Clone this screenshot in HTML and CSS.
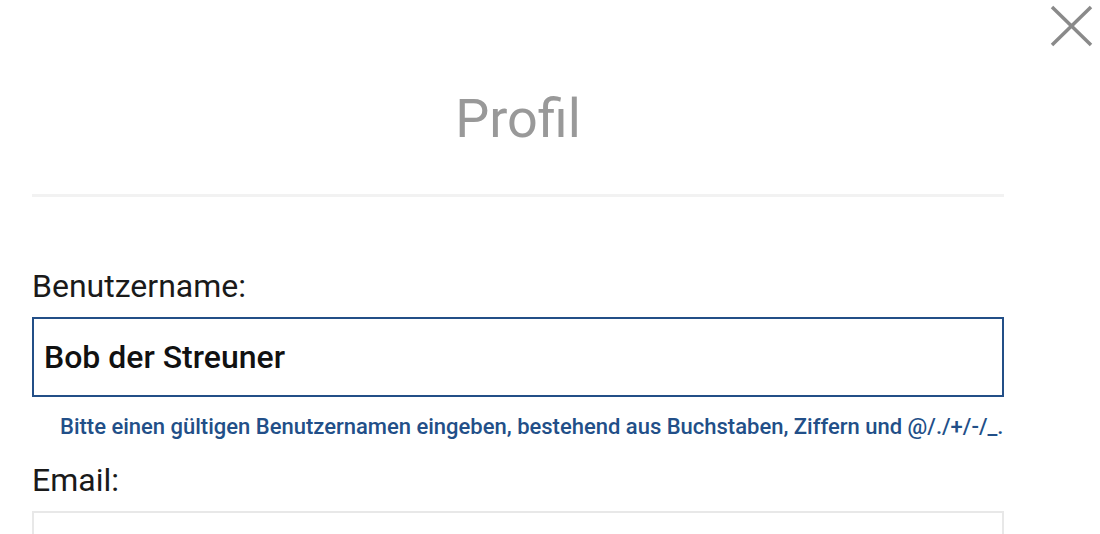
FILE: index.html
```html
<!DOCTYPE html>
<html lang="de">
<head>
  <meta charset="UTF-8" />
  <meta name="viewport" content="width=device-width, initial-scale=1" />
  <title>Profil</title>
  <link rel="stylesheet" href="styles.css">
</head>
<body>

<button class="close" type="button" aria-label="Schließen">
  <svg width="44" height="44" viewBox="0 0 44 44">
    <path d="M2 3 L41 41 M41 3 L2 41" stroke="#8a8a8a" stroke-width="3.5" fill="none" />
  </svg>
</button>

<div class="panel">
  <h1>Profil</h1>

  <form>
    <label for="username">Benutzername:</label>
    <input type="text" id="username" class="active" value="Bob der Streuner">
    <p class="help">Bitte einen gültigen Benutzernamen eingeben, bestehend aus Buchstaben, Ziffern und @/./+/-/_.</p>

    <label for="email">Email:</label>
    <input type="email" id="email">
  </form>
</div>

</body>
</html>
```

FILE: styles.css
```css
body {
  margin: 0;
  font-family: Roboto, 'Noto Sans', sans-serif;
  background: #fff;
  color: #1a1a1a;
  overflow: hidden;
}

.close {
  position: absolute;
  top: 4px;
  right: 6px;
  padding: 0;
  border: none;
  background: none;
  cursor: pointer;
}

.panel {
  width: 972px;
  margin-left: 32px;
}

h1 {
  margin: 0;
  padding-top: 84px;
  padding-bottom: 40px;
  text-align: center;
  font-size: 54px;
  font-weight: 400;
  color: #999;
  border-bottom: 3px solid #f2f2f2;
  line-height: 70px;
}

form {
  padding-top: 70px;
}

label {
  display: block;
  font-size: 32px;
  line-height: 38px;
  margin-bottom: 12px;
}

input {
  display: block;
  box-sizing: border-box;
  width: 100%;
  height: 80px;
  padding: 0 10px;
  border: 2px solid #e8e8e8;
  font-family: inherit;
  font-size: 32px;
  font-weight: 500;
  color: #111;
  outline: none;
}

input.active {
  border-color: #234f87;
}

.help {
  margin: 17px 0 21px;
  padding-left: 28px;
  font-size: 22px;
  line-height: 26px;
  font-weight: 500;
  color: #224f88;
}
```
